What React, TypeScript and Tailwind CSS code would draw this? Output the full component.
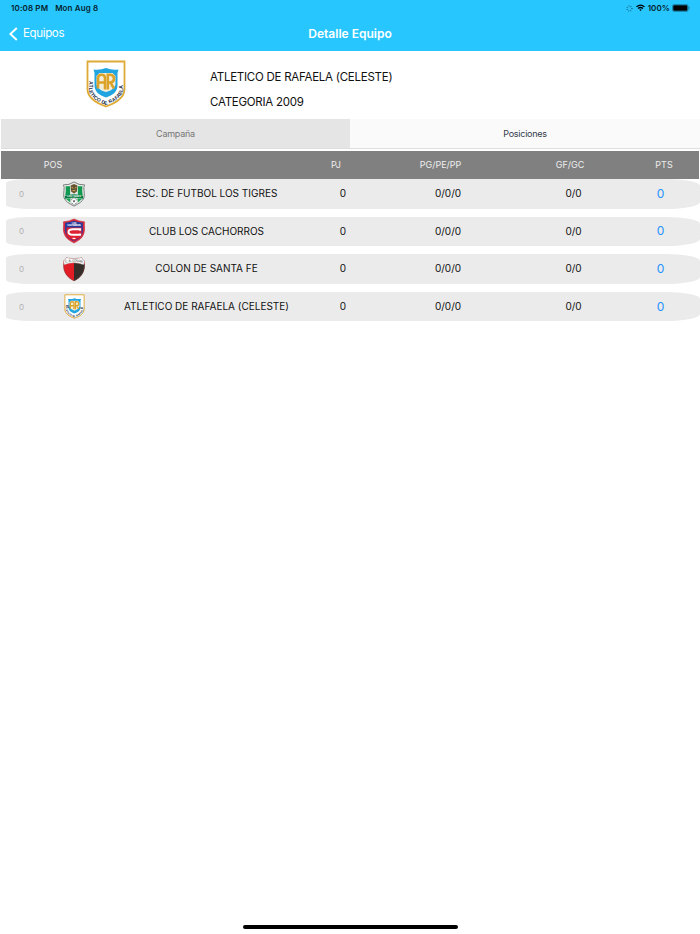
import React from 'react';

interface Standing {
  pos: number;
  team: string;
  crest: React.ReactNode;
  played: number;
  record: string;
  goals: string;
  points: number;
}

function RafaelaCrest({ className, ring }: { className: string; ring: string }) {
  return (
    <svg viewBox="0 0 40 48" className={className}>
      <path d="M1.5 1.5H38.5V29C38.5 38 30 43 20 46.5C10 43 1.5 38 1.5 29Z" fill="#fff" stroke="#dfaa35" strokeWidth="1.8" />
      <path d="M7.5 9.5Q14 10.5 20 8Q26 10.5 32.5 9.5L31.5 13V25C31.5 32 27 35 20 37.5C13 35 8.5 32 8.5 25V13Z" fill="#20a5e0" />
      <path d="M13.5 13H26.5L29.5 16V25Q27 30.5 20 32Q13 30.5 10.5 25V16Z" fill="#f3eedb" />
      <g fill="none" stroke="#dca32b" strokeWidth="2.6">
        <path d="M12 28.5V18Q12 14.8 15.6 14.8Q19 14.8 19 18V29.5M12 22.5H19" />
        <path d="M21.8 29.5V14.8H24.3Q28 15 28 18.5T24.3 22.5H21.8M24.5 22.5L28 28.5" />
      </g>
      <path id={ring} d="M3 21V29C3 36 10 41.5 20 44.8C30 41.5 37 36 37 29V20" fill="none" />
      <text fontSize="5" fontWeight="700" fill="#182c49" className="font-['Liberation_Sans',sans-serif]">
        <textPath href={`#${ring}`} textLength="61">ATLETICO DE RAFAELA</textPath>
      </text>
    </svg>
  );
}

function TigresCrest() {
  return (
    <svg viewBox="0 0 24 27" className="h-[26px] w-[24px]">
      <path d="M1 4Q7 4.5 12 1Q17 4.5 23 4C21 7 23.5 12 22.5 17C21 21.5 17 23.5 12 26C7 23.5 3 21.5 1.5 17C.5 12 3 7 1 4Z" fill="#e8ebe7" stroke="#777d78" strokeWidth="1" />
      <path d="M3.3 5.5H8V15H2.9Q3.8 10 3.3 5.5ZM16 5.5H20.7Q20.2 10 21.1 15H16Z" fill="#129951" />
      <path d="M8.5 4.7L12 3L15.5 4.7L15 11L12 13L9 11Z" fill="#665332" />
      <path d="M9.5 6.5L11.2 7.5M14.5 6.5L12.8 7.5M10.5 10H13.5" stroke="#d8b066" strokeWidth="1" />
      <path d="M2.5 15.5Q12 12 21.5 15.5V18.5Q12 16.5 2.5 18.5Z" fill="#087a42" />
      <text x="12" y="16.4" fontSize="2.4" fontWeight="700" textAnchor="middle" fill="#fff" textLength="14">LOS TIGRES</text>
      <path d="M3.5 18.5L8.5 17.8L7.8 22ZM20.5 18.5L15.5 17.8L16.2 22Z" fill="#14a451" />
      <circle cx="12" cy="21.2" r="3.5" fill="#fff" stroke="#7d8983" strokeWidth=".5" />
      <path d="M11 20.5H13L12 22ZM9.3 19.5L10.4 18.7M14.7 19.5L13.6 18.7M9.8 23L11 23.8M14.2 23L13 23.8" fill="#4b5550" stroke="#4b5550" strokeWidth=".6" />
    </svg>
  );
}

function CachorrosCrest() {
  return (
    <svg viewBox="0 0 24 27" className="h-[26px] w-[24px]">
      <path d="M1 4Q7 3.5 12 1Q17 3.5 23 4C22.3 8 24 12 22 17C20.5 21 17 23.5 12 26C7 23.5 3.5 21 2 17C0 12 1.7 8 1 4Z" fill="#e22a3a" stroke="#b51b30" strokeWidth=".5" />
      <path d="M2.7 5Q8 4.5 12 2.8Q16 4.5 21.3 5C20.8 9 22.2 12 20.5 16.5C19 20 16 22.2 12 24.2C8 22.2 5 20 3.5 16.5C1.8 12 3.2 9 2.7 5Z" fill="#273b9b" />
      <path d="M4.2 9.8H19.8V17.5L17.5 20.5L12 23.5L6.5 20.5L4.2 17.5Z" fill="#df2134" />
      <text x="12" y="5.8" fontSize="2.5" fontWeight="700" textAnchor="middle" fill="#fff">LOS</text>
      <text x="12" y="8.7" fontSize="2.7" fontWeight="700" textAnchor="middle" fill="#fff" textLength="14">CACHORROS</text>
      <path d="M18.3 13.2V11.7H11Q6.3 11.7 6.3 14.6T11 17.5H18.3V16" fill="none" stroke="#fff" strokeWidth="2.1" />
      <path d="M10.5 21.2H13.5" stroke="#fff" strokeWidth="1.2" />
    </svg>
  );
}

function ColonCrest() {
  return (
    <svg viewBox="0 0 24 27" className="h-[26px] w-[24px]">
      <path d="M1 5Q3 4.5 4 1.5Q12 4 20 1.5Q21 4.5 23 5V10C23 17 19 22.5 12 26C5 22.5 1 17 1 10Z" fill="#e11c25" />
      <path d="M12 7.2L23 8V10C23 17 19 22.5 12 26Z" fill="#352d29" />
      <path d="M1 5Q3 4.5 4 1.5Q12 4 20 1.5Q21 4.5 23 5L22 9Q12 5.2 2 9Z" fill="#f7f7f7" stroke="#999" strokeWidth=".4" />
      <path id="colon-band" d="M3 7.4Q12 4.2 21.5 7.4" fill="none" />
      <text fontSize="3.2" fontWeight="500" fill="#444">
        <textPath href="#colon-band" textLength="18">C. A. COLON</textPath>
      </text>
      <path d="M1.2 8.5V10C1.2 17 5 22.3 12 25.8C19 22.3 22.8 17 22.8 10V8.5" fill="none" stroke="#6b5550" strokeWidth=".5" />
    </svg>
  );
}

const standings: Standing[] = [
  { pos: 0, team: 'ESC. DE FUTBOL LOS TIGRES', crest: <TigresCrest />, played: 0, record: '0/0/0', goals: '0/0', points: 0 },
  { pos: 0, team: 'CLUB LOS CACHORROS', crest: <CachorrosCrest />, played: 0, record: '0/0/0', goals: '0/0', points: 0 },
  { pos: 0, team: 'COLON DE SANTA FE', crest: <ColonCrest />, played: 0, record: '0/0/0', goals: '0/0', points: 0 },
  { pos: 0, team: 'ATLETICO DE RAFAELA (CELESTE)', crest: <RafaelaCrest ring="ring-row" className="h-[25px] w-[21px]" />, played: 0, record: '0/0/0', goals: '0/0', points: 0 },
];

function StatusBar() {
  return (
    <div className="flex h-4 items-center pr-[10px] pl-[11px] text-[8px] leading-4 font-semibold text-[#06232d]">
      <span className="tracking-[0.12px]">10:08 PM</span>
      <span className="ml-[7px] tracking-[0.12px]">Mon Aug 8</span>
      <div className="ml-auto flex items-center">
        <svg viewBox="0 0 8 8" className="mr-[3px] size-[7px] opacity-60">
          <circle cx="4" cy="4" r="2.7" fill="none" stroke="#06232d" strokeWidth="1.8" strokeDasharray="0.7 1.42" />
        </svg>
        <svg viewBox="0 0 10 8" className="mr-[3px] h-[7.5px] w-[9px]" fill="none" stroke="#000" strokeWidth="1.4">
          <path d="M.5 3Q5 -1 9.5 3M2.2 4.9Q5 2.6 7.8 4.9" />
          <path d="M3.6 6.2Q5 5.2 6.4 6.2L5 7.7Z" fill="#000" stroke="none" />
        </svg>
        <span className="tracking-[0.1px]">100%</span>
        <svg viewBox="0 0 18 8" className="ml-[2px] h-[8px] w-[18px]">
          <rect x=".4" y=".4" width="15.8" height="7.2" rx="2.1" fill="none" stroke="#126881" strokeWidth=".7" />
          <rect x="1.2" y="1.2" width="14.2" height="5.6" rx="1.2" fill="#000" />
          <path d="M17 2.8Q18.3 4 17 5.2Z" fill="#126881" />
        </svg>
      </div>
    </div>
  );
}

export default function App() {
  return (
    <div className="flex h-[934px] w-[700px] flex-col overflow-hidden bg-white font-['Inter',sans-serif] text-[#111]">
      <header className="h-[51px] bg-[#27c6ff]">
        <StatusBar />
        <nav className="grid h-[35px] grid-cols-3 items-center text-white">
          <button className="flex items-center pl-[9px] text-[11.5px] tracking-[-0.35px]">
            <svg viewBox="0 0 9 14" className="mr-[5px] h-[14px] w-[9px]" fill="none" stroke="currentColor" strokeWidth="1.9">
              <path d="M7.8 1L1.4 7L7.8 13" />
            </svg>
            <span className="pt-px">Equipos</span>
          </button>
          <h1 className="text-center text-[12px] font-semibold">Detalle Equipo</h1>
        </nav>
      </header>

      <section className="flex h-[68px]">
        <div className="flex w-[210px] justify-center pt-[9px] pl-px">
          <RafaelaCrest ring="ring-header" className="h-[48px] w-[40px]" />
        </div>
        <div className="pt-[14px] text-[11.5px] leading-[25px] tracking-[-0.25px]">
          <p>ATLETICO DE RAFAELA (CELESTE)</p>
          <p>CATEGORIA 2009</p>
        </div>
      </section>

      {/* Tabs */}
      <div className="ml-px grid h-[30px] grid-cols-[349px_350px] border-b border-[#dedede] text-[9px] tracking-[-0.25px]">
        <button className="bg-[#e5e5e5] text-[#777]">Campaña</button>
        <button className="bg-[#fafafa] text-[#343b4b]">Posiciones</button>
      </div>

      {/* Standings */}
      <div className="mx-px mt-[2px] grid h-[28px] grid-cols-[104px_196px_70px_139px_120px_68px] items-center bg-[#808080] text-center text-[9px] text-[#eee]">
        <span>POS</span>
        <span />
        <span>PJ</span>
        <span>PG/PE/PP</span>
        <span>GF/GC</span>
        <span>PTS</span>
      </div>
      <div className="flex flex-col gap-[8.1px] pl-[6px]">
        {standings.map((row) => (
          <div
            key={row.team}
            className="grid h-[29.5px] grid-cols-[31px_74px_191px_82px_128px_123px_52px] items-center rounded-[26px_34px_34px_26px/4px_7px_7px_4px] bg-[#ebebeb] text-center text-[10px]"
          >
            <span className="text-[8px] text-[#b0b0b0]">{row.pos}</span>
            <span className="flex justify-center">{row.crest}</span>
            <span className="whitespace-nowrap">{row.team}</span>
            <span>{row.played}</span>
            <span>{row.record}</span>
            <span>{row.goals}</span>
            <span className="-ml-px text-[12px] text-[#2492ff]">{row.points}</span>
          </div>
        ))}
      </div>

      <div className="mx-auto mt-auto mb-[5px] h-[4px] w-[215px] rounded-full bg-black" />
    </div>
  );
}
